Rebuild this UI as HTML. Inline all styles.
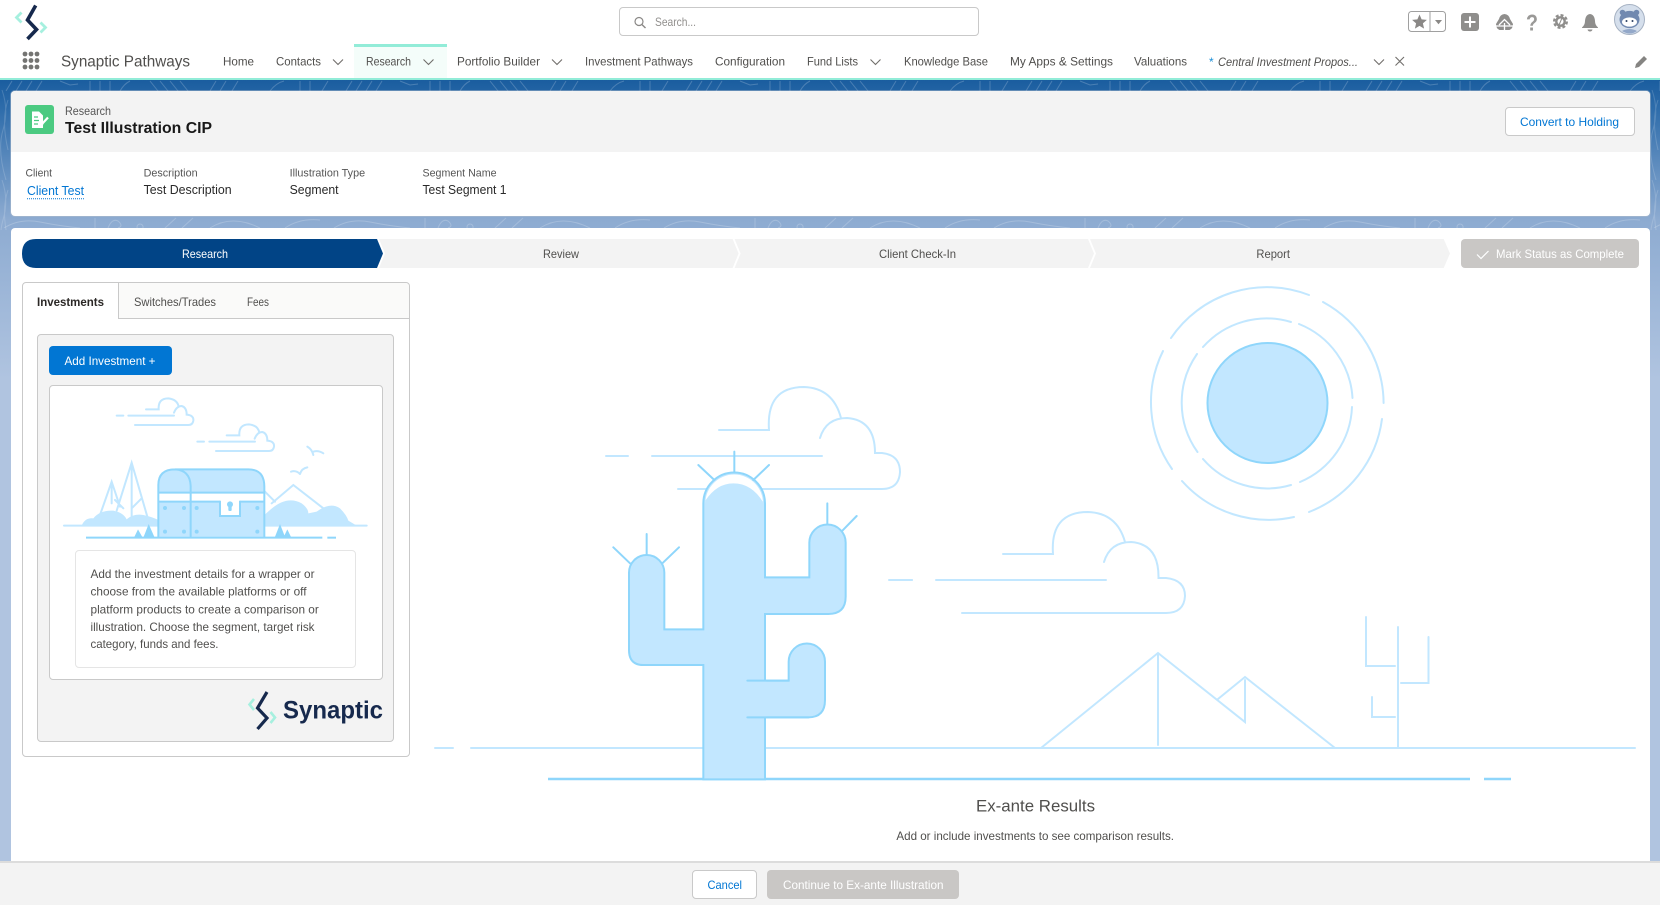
<!DOCTYPE html>
<html lang="en">
<head>
<meta charset="utf-8">
<title>Test Illustration CIP</title>
<style>
html,body{margin:0;padding:0;width:1660px;height:905px;overflow:hidden;background:#fff;font-family:"Liberation Sans",sans-serif}
.a{position:absolute;box-sizing:border-box}
#bg{left:0;top:80px;width:1660px;height:825px;background:linear-gradient(180deg,#1a5d9f 0,#2f6dab 30px,#8dabd1 140px,#b0c4e0 300px,#b0c4e0 100%)}
svg{position:absolute;left:0;top:0}
text{font-family:"Liberation Sans",sans-serif;fill:#504f4d;font-size:12px}
</style>
</head>
<body>
<div class="a" style="left:0;top:0;width:1660px;height:78px;background:#fff"></div>
<div class="a" style="left:354px;top:47px;width:93px;height:31px;background:#f4fdfa"></div>
<div class="a" style="left:354px;top:44px;width:93px;height:3px;background:#92ecd8"></div>
<div class="a" style="left:0;top:78px;width:1660px;height:2px;background:#92ecd8"></div>
<div id="bg" class="a"></div>
<div class="a" style="left:619px;top:7px;width:360px;height:29px;background:#fff;border:1px solid #c9c9c9;border-radius:4px"></div>

<div class="a" style="left:11px;top:91px;width:1639px;height:125px;background:#fff;border-radius:4px;box-shadow:0 0 0 1px rgba(180,190,205,.45)"></div>
<div class="a" style="left:11px;top:91px;width:1639px;height:61px;background:#f3f3f3;border-radius:4px 4px 0 0"></div>
<div class="a" style="left:1505px;top:107px;width:130px;height:29px;background:#fff;border:1px solid #c9c9c9;border-radius:4px"></div>

<div class="a" style="left:11px;top:228px;width:1639px;height:640px;background:#fff;border-radius:4px 4px 0 0"></div>

<div class="a" style="left:22px;top:282px;width:388px;height:475px;background:#fff;border:1px solid #c9c9c9;border-radius:4px"></div>
<div class="a" style="left:118px;top:283px;width:291px;height:36px;background:#fafaf9;border-left:1px solid #c9c9c9;border-bottom:1px solid #c9c9c9;border-radius:0 4px 0 0"></div>
<div class="a" style="left:37px;top:334px;width:357px;height:408px;background:#f3f3f3;border:1px solid #c9c9c9;border-radius:4px"></div>
<div class="a" style="left:49px;top:346px;width:123px;height:29px;background:#0176d3;border-radius:4px"></div>
<div class="a" style="left:49px;top:385px;width:334px;height:295px;background:#fff;border:1px solid #c9c9c9;border-radius:4px"></div>
<div class="a" style="left:75px;top:550px;width:281px;height:118px;background:#fff;border:1px solid #e5e5e5;border-radius:4px"></div>

<div class="a" style="left:1461px;top:239px;width:178px;height:29px;background:#c9c7c5;border-radius:4px"></div>

<div class="a" style="left:0;top:861px;width:1660px;height:44px;background:#f3f3f3;border-top:2px solid #dcdcdc"></div>
<div class="a" style="left:692px;top:870px;width:65px;height:29px;background:#fff;border:1px solid #c9c9c9;border-radius:4px"></div>
<div class="a" style="left:767px;top:870px;width:192px;height:29px;background:#c9c7c5;border-radius:4px"></div>

<svg width="1660" height="905" viewBox="0 0 1660 905" xmlns="http://www.w3.org/2000/svg">
<defs>
<pattern id="p1" width="340" height="12" patternUnits="userSpaceOnUse" x="0" y="80">
<path d="M6 11L12 1M16 11L22 1M26 11L32 1M36 11L42 1M60 1L70 5L78 4M90 11V1M100 11V1M110 11V1M120 11Q124 4 130 1M150 1L158 11M160 1L168 11M170 1L178 11M180 1L188 11M210 11L216 1M220 11L226 1M232 11L238 1M270 11Q276 3 284 1M300 11V1M310 11V1M322 11L328 1" fill="none" stroke="#fff" stroke-opacity=".2" stroke-width="1"/>
</pattern>
<pattern id="p2" width="330" height="13" patternUnits="userSpaceOnUse" x="0" y="216">
<path d="M4 12Q20 2 40 6T80 12M95 12V2M108 12Q112 2 118 5Q124 10 118 12M140 8a3 3 0 1 0 .1 0M165 12L176 2M182 12L193 2M210 12Q232 -2 260 12M285 12Q300 2 320 4" fill="none" stroke="#fff" stroke-opacity=".2" stroke-width="1"/>
</pattern>
<pattern id="p3" width="11" height="90" patternUnits="userSpaceOnUse" x="0" y="90">
<path d="M2 0Q9 20 3 40T6 90M8 10Q1 30 8 60" fill="none" stroke="#fff" stroke-opacity=".16" stroke-width="1"/>
</pattern>
</defs>
<rect x="0" y="80" width="1660" height="11" fill="url(#p1)"/>
<rect x="0" y="216" width="1660" height="12" fill="url(#p2)"/>
<rect x="0" y="90" width="11" height="140" fill="url(#p3)"/>
<rect x="1650" y="90" width="10" height="140" fill="url(#p3)"/>

<!-- logo -->
<path d="M35.7 5.5L27.5 20L36.5 29.5L27.5 39" fill="none" stroke="#16294d" stroke-width="3.6"/>
<path d="M21.5 12.5L16.5 17.5L21.5 22.5M40.5 22.5L45.5 27.5L40.5 32.5" fill="none" stroke="#a6f0df" stroke-width="2.8"/>

<!-- waffle -->
<g fill="#747472"><circle cx="25" cy="54" r="2.4"/><circle cx="31" cy="54" r="2.4"/><circle cx="37" cy="54" r="2.4"/><circle cx="25" cy="60.5" r="2.4"/><circle cx="31" cy="60.5" r="2.4"/><circle cx="37" cy="60.5" r="2.4"/><circle cx="25" cy="67" r="2.4"/><circle cx="31" cy="67" r="2.4"/><circle cx="37" cy="67" r="2.4"/></g>

<text x="61" y="66.5" style="font-size:16px" textLength="129" lengthAdjust="spacingAndGlyphs">Synaptic Pathways</text>
<text x="223" y="65.5" textLength="31" lengthAdjust="spacingAndGlyphs">Home</text>
<text x="276" y="65.5" textLength="45" lengthAdjust="spacingAndGlyphs">Contacts</text>
<text x="366" y="65.5" textLength="45" lengthAdjust="spacingAndGlyphs">Research</text>
<text x="457" y="65.5" textLength="83" lengthAdjust="spacingAndGlyphs">Portfolio Builder</text>
<text x="585" y="65.5" textLength="108" lengthAdjust="spacingAndGlyphs">Investment Pathways</text>
<text x="715" y="65.5" textLength="70" lengthAdjust="spacingAndGlyphs">Configuration</text>
<text x="807" y="65.5" textLength="51" lengthAdjust="spacingAndGlyphs">Fund Lists</text>
<text x="904" y="65.5" textLength="84" lengthAdjust="spacingAndGlyphs">Knowledge Base</text>
<text x="1010" y="65.5" textLength="103" lengthAdjust="spacingAndGlyphs">My Apps &amp; Settings</text>
<text x="1134" y="65.5" textLength="53" lengthAdjust="spacingAndGlyphs">Valuations</text>
<text x="1209" y="66" style="fill:#1b8fd8">*</text>
<text x="1218" y="66" font-style="italic" textLength="140" lengthAdjust="spacingAndGlyphs">Central Investment Propos...</text>
<path d="M333 59.5l5 5l5-5M423.5 59.5l5 5l5-5M552 59.5l5 5l5-5M870.5 59.5l5 5l5-5M1374 59.5l5 5l5-5M1395.5 57L1404 65.5M1404 57L1395.5 65.5" fill="none" stroke="#706e6b" stroke-width="1.1"/>
<path d="M1635 68l1-4l8-8l3 3l-8 8z" fill="#858482"/>

<!-- search -->
<circle cx="639" cy="21.5" r="4" fill="none" stroke="#8a8886" stroke-width="1.2"/>
<path d="M642 24.6L645.5 28" stroke="#8a8886" stroke-width="1.4"/>
<text x="655" y="26" style="fill:#918f8d" textLength="41" lengthAdjust="spacingAndGlyphs">Search...</text>

<!-- utility icons -->
<rect x="1408.5" y="11.5" width="37" height="20" rx="3" fill="#fff" stroke="#a0a0a0"/>
<path d="M1430 11.5V31.5" stroke="#a0a0a0"/>
<path d="M1419.5 14.5l2.1 4.9l5.3.5l-4 3.5l1.2 5.2l-4.6-2.7l-4.6 2.7l1.2-5.2l-4-3.5l5.3-.5z" fill="#8a8886"/>
<path d="M1435 20h7l-3.5 4.3z" fill="#8a8886"/>
<rect x="1461" y="13" width="18" height="18" rx="3" fill="#8f8e8c"/>
<path d="M1470 16.5V27.5M1464.5 22H1475.5" stroke="#fff" stroke-width="2"/>
<path d="M1504.5 14Q1500 14.5 1499 19L1496 24Q1496 28.5 1499.5 30L1509.5 30Q1513 28.5 1513 24L1510 19Q1509 14.5 1504.5 14Z" fill="#8f8e8c"/>
<path d="M1499 25L1504.5 19.5L1510 25M1496 26H1513M1504.5 23V30" fill="none" stroke="#fff" stroke-width="1.3"/>
<text x="1526" y="30.5" font-weight="bold" style="font-size:23px;fill:#9a9997" textLength="12" lengthAdjust="spacingAndGlyphs">?</text>
<circle cx="1560.5" cy="21.5" r="6.4" fill="none" stroke="#8f8e8c" stroke-width="2.2" stroke-dasharray="3 2"/>
<circle cx="1560.5" cy="21.5" r="4.2" fill="none" stroke="#8f8e8c" stroke-width="2.4"/>
<path d="M1562 18L1559 25" stroke="#8f8e8c" stroke-width="1"/>
<path d="M1590 14Q1594.5 14.5 1595 21Q1595 25 1598 27.5V28H1582V27.5Q1585 25 1585 21Q1585.5 14.5 1590 14Z" fill="#8f8e8c"/>
<path d="M1587.5 29.5H1592.5Q1592 31.5 1590 31.5Q1588 31.5 1587.5 29.5Z" fill="#8f8e8c"/>
<circle cx="1629.5" cy="19.5" r="15" fill="#d5dfec" stroke="#a6b2c3" stroke-width="1"/>
<circle cx="1622.5" cy="12.5" r="2.8" fill="#7189b0"/>
<circle cx="1636.5" cy="12.5" r="2.8" fill="#7189b0"/>
<ellipse cx="1629.5" cy="19.5" rx="10" ry="8.6" fill="#7189b0"/>
<ellipse cx="1629.5" cy="22" rx="7.5" ry="4.6" fill="#fff"/>
<circle cx="1626.5" cy="21" r="1" fill="#2b3f63"/><circle cx="1632.5" cy="21" r="1" fill="#2b3f63"/>
<path d="M1622 31Q1629.5 27 1637 31Q1630 36 1622 31Z" fill="#93a8c9"/>

<!-- record header -->
<rect x="25" y="105" width="29" height="29" rx="3" fill="#4bca81"/>
<path d="M32 111.5H39L43 115.5V128H32Z" fill="#fff"/>
<path d="M34 117H38M34 120.5H39M34 124H38" stroke="#4bca81" stroke-width="1.2"/>
<path d="M42 124L48 117.5" stroke="#fff" stroke-width="2.2"/>
<path d="M41 125.5L43.5 125L42 123.2Z" fill="#fff"/>
<text x="65" y="115" style="font-size:12px;fill:#555" textLength="46" lengthAdjust="spacingAndGlyphs">Research</text>
<text x="65" y="133" font-weight="bold" style="font-size:16px;fill:#181818" textLength="147" lengthAdjust="spacingAndGlyphs">Test Illustration CIP</text>
<text x="1520" y="126" style="fill:#0176d3" textLength="99" lengthAdjust="spacingAndGlyphs">Convert to Holding</text>

<g style="font-size:12px">
<text x="25.5" y="176.5" style="font-size:11px;fill:#555" textLength="26.5" lengthAdjust="spacingAndGlyphs">Client</text>
<text x="143.6" y="176.5" style="font-size:11px;fill:#555" textLength="54" lengthAdjust="spacingAndGlyphs">Description</text>
<text x="289.6" y="176.5" style="font-size:11px;fill:#555" textLength="75.5" lengthAdjust="spacingAndGlyphs">Illustration Type</text>
<text x="422.5" y="176.5" style="font-size:11px;fill:#555" textLength="74" lengthAdjust="spacingAndGlyphs">Segment Name</text>
<text x="27" y="195" style="font-size:13px;fill:#0176d3" textLength="57" lengthAdjust="spacingAndGlyphs">Client Test</text>
<text x="143.6" y="194" style="font-size:13px;fill:#2a2a2a" textLength="88" lengthAdjust="spacingAndGlyphs">Test Description</text>
<text x="289.6" y="194" style="font-size:13px;fill:#2a2a2a" textLength="49" lengthAdjust="spacingAndGlyphs">Segment</text>
<text x="422.5" y="194" style="font-size:13px;fill:#2a2a2a" textLength="84" lengthAdjust="spacingAndGlyphs">Test Segment 1</text>
</g>
<path d="M27 198.7H84" stroke="#0176d3" stroke-width="1" stroke-dasharray="1 1"/>

<!-- path -->
<path d="M36 239H377L383 253.5L377 268H36Q22 268 22 253.5Q22 239 36 239Z" fill="#014486"/>
<path d="M379 239H732.6L738.6 253.5L732.6 268H379L385 253.5Z" fill="#f3f3f3"/>
<path d="M734.6 239H1088L1094 253.5L1088 268H734.6L740.6 253.5Z" fill="#f3f3f3"/>
<path d="M1090 239H1443.7L1450 253.5L1443.7 268H1090L1096 253.5Z" fill="#f3f3f3"/>
<text x="182" y="258" style="fill:#fff" textLength="46" lengthAdjust="spacingAndGlyphs">Research</text>
<text x="543" y="258" textLength="36" lengthAdjust="spacingAndGlyphs">Review</text>
<text x="879" y="258" textLength="77" lengthAdjust="spacingAndGlyphs">Client Check-In</text>
<text x="1256.4" y="258" textLength="33.6" lengthAdjust="spacingAndGlyphs">Report</text>
<path d="M1477 254.5L1481 258.5L1488.5 251" fill="none" stroke="#fff" stroke-width="1.2"/>
<text x="1496" y="258" style="fill:#fff" textLength="128" lengthAdjust="spacingAndGlyphs">Mark Status as Complete</text>

<!-- tabs -->
<text x="37" y="306" font-weight="bold" style="fill:#2b2826" textLength="67" lengthAdjust="spacingAndGlyphs">Investments</text>
<text x="134" y="306" textLength="82" lengthAdjust="spacingAndGlyphs">Switches/Trades</text>
<text x="247" y="306" textLength="22" lengthAdjust="spacingAndGlyphs">Fees</text>
<text x="64.5" y="365" style="fill:#fff" textLength="91" lengthAdjust="spacingAndGlyphs">Add Investment +</text>

<!-- chest illustration -->
<g transform="translate(0,270) scale(.33333)" fill="none" stroke-linecap="round">
<g stroke="#c2e7ff" stroke-width="6">
<path d="M438 418H476Q474 385 505 385Q532 388 536 410M522 428Q530 408 545 408Q560 412 560 434Q582 436 580 452Q578 465 565 465H405M350 437H370M385 437H522"/>
<path d="M680 496H718Q716 463 747 463Q774 466 778 488M764 506Q772 486 787 486Q802 490 802 512Q824 514 822 530Q820 543 807 543H648M592 515H612M628 515H765"/>
<path d="M922 530Q936 538 940 555M940 545Q955 540 970 550M873 605Q888 600 900 612M900 612Q905 595 922 592"/>
<path d="M192 767H1100"/>
<path d="M300 735L335 635L360 710M350 722L395 578L442 740M395 578V750M335 635V700M345 690L370 715M395 715L425 685" />
<path d="M795 665L825 695M815 700L880 645L970 715"/>
</g>
<path d="M245 767Q255 742 280 745Q300 720 340 722Q370 728 380 748Q400 730 430 735Q455 740 475 750V767Z" fill="#c2e7ff"/>
<path d="M793 767V735L810 720Q860 675 905 700Q925 715 925 730L950 725Q990 695 1020 715Q1040 735 1045 752L1070 767Z" fill="#c2e7ff"/>
<path d="M475 800V645Q475 598 525 598H745Q793 598 793 650V800Z" fill="#c2e7ff"/>
<rect x="475" y="668" width="318" height="28" fill="#fff" stroke="none"/>
<path d="M660 695V738H720V695" fill="#fff" stroke="#8fd6fb" stroke-width="6"/>
<g stroke="#8fd6fb" stroke-width="6">
<path d="M475 800V645Q475 598 525 598H745Q793 598 793 650V800M475 668H793M475 695H660M720 695H793M572 800V648Q570 600 525 598"/>
<path d="M258 803H967" stroke-linecap="butt"/>
<path d="M982 803H1008" stroke-linecap="butt"/>
</g>
<g fill="#8fd6fb">
<circle cx="495" cy="714" r="6"/><circle cx="552" cy="714" r="6"/><circle cx="590" cy="714" r="6"/><circle cx="772" cy="714" r="6"/><circle cx="495" cy="785" r="6"/><circle cx="552" cy="785" r="6"/><circle cx="590" cy="785" r="6"/><circle cx="772" cy="785" r="6"/>
<circle cx="690" cy="703" r="9"/><rect x="685" y="705" width="10" height="18" rx="3"/>
<path d="M402 803L414 778L428 803ZM430 803L446 762L464 803ZM824 803L840 762L856 803ZM850 803L862 778L874 803Z"/>
</g>
</g>

<!-- text card -->
<g style="font-size:12px">
<text x="90.5" y="578" textLength="224" lengthAdjust="spacingAndGlyphs">Add the investment details for a wrapper or</text>
<text x="90.5" y="595.5" textLength="216" lengthAdjust="spacingAndGlyphs">choose from the available platforms or off</text>
<text x="90.5" y="613.5" textLength="228.3" lengthAdjust="spacingAndGlyphs">platform products to create a comparison or</text>
<text x="90.5" y="631" textLength="224" lengthAdjust="spacingAndGlyphs">illustration. Choose the segment, target risk</text>
<text x="90.5" y="648" textLength="128" lengthAdjust="spacingAndGlyphs">category, funds and fees.</text>
</g>

<!-- Synaptic footer logo -->
<path d="M267 692L257.5 708L267 718L257.5 729" fill="none" stroke="#16294d" stroke-width="3.2"/>
<path d="M254 699L249.5 704.5L254 710M270.5 712L275 717.5L270.5 723" fill="none" stroke="#a6f0df" stroke-width="2.6"/>
<text x="283" y="718.5" font-weight="bold" style="font-size:25px;fill:#16294d" textLength="100" lengthAdjust="spacingAndGlyphs">Synaptic</text>

<!-- big illustration -->
<g fill="none" stroke="#c2e7ff" stroke-width="2" stroke-linecap="round">
<!-- rings -->
<path d="M1171 338A116 116 0 0 1 1309 295M1323 302A116 116 0 0 1 1383.6 403M1382 419A116 116 0 0 1 1309 512M1294 517A116 116 0 0 1 1182 481M1172 469A116 116 0 0 1 1163 351"/>
<path d="M1203 347A85 85 0 0 1 1291 322M1299 324A85 85 0 0 1 1352.5 398M1352 407A85 85 0 0 1 1300 482M1291 485A85 85 0 0 1 1203 459M1197.5 452A85 85 0 0 1 1197 354"/>
<!-- cloud top -->
<path d="M719 430H769Q766 387 804 387Q833 388 841 418M820 438Q826 418 847 418Q875 420 875 453H882Q900 455 900 472Q899 489 882 489H678M606 456H628M652 456H822M889 580H912"/>
<!-- cloud right -->
<path d="M1003 554H1053Q1050 512 1088 512Q1117 513 1125 542M1104 562Q1110 542 1131 542Q1159 544 1158.5 578H1166Q1185 580 1185 596Q1184 613 1166 613H962M890 580H912M936 580H1106"/>
<!-- ground -->
<path d="M435 748H453M471 748H703M765 748H1635"/>
<!-- mountains -->
<path d="M1041 748L1158 653L1245 722V680M1158 653V745M1218 699L1245 677L1335 748"/>
<path d="M1366 617V666H1395M1398 627V748M1428.5 637V683H1401M1372 697V717H1395"/>
</g>
<circle cx="1267.5" cy="403" r="60" fill="#c2e7ff" stroke="#8fd6fb" stroke-width="2"/>
<path d="M548 779H1470M1484 779H1511" stroke="#8fd6fb" stroke-width="2.4"/>

<g transform="translate(580,370) scale(.33333)" fill="none">
<path d="M370 1228V885H190Q147 885 147 840V608A53 53 0 0 1 253 608V778H370V400A92 92 0 0 1 555 400V622H688V518A54 54 0 0 1 797 518V680Q797 732 745 732H555V932H626V875A54 54 0 0 1 735 875V990Q735 1042 685 1042H555V1228Z" fill="#c2e7ff" stroke="#8fd6fb" stroke-width="6"/>
<path d="M376 392V400A86 86 0 0 1 549 400V396Q515 340 460 340Q410 340 376 392Z" fill="#fff"/>
<path d="M555 932V1042" stroke="#c2e7ff" stroke-width="8"/>
<path d="M502 932H626M502 1042H685" stroke="#8fd6fb" stroke-width="6" stroke-linecap="round"/>
<path d="M463 245V308M355 285L403 330M567 285L520 330M200 492V555M100 532L150 580M297 532L247 580M742 400V463M830 438L787 482" stroke="#8fd6fb" stroke-width="6" stroke-linecap="round"/>
</g>

<text x="976" y="811.5" style="font-size:17px;fill:#504f4d" textLength="119" lengthAdjust="spacingAndGlyphs">Ex-ante Results</text>
<text x="896.4" y="840" textLength="277.6" lengthAdjust="spacingAndGlyphs">Add or include investments to see comparison results.</text>
<text x="707.5" y="889" style="fill:#0176d3" textLength="34.5" lengthAdjust="spacingAndGlyphs">Cancel</text>
<text x="783" y="889" style="fill:#fff" textLength="160.5" lengthAdjust="spacingAndGlyphs">Continue to Ex-ante Illustration</text>
</svg>
</body>
</html>
